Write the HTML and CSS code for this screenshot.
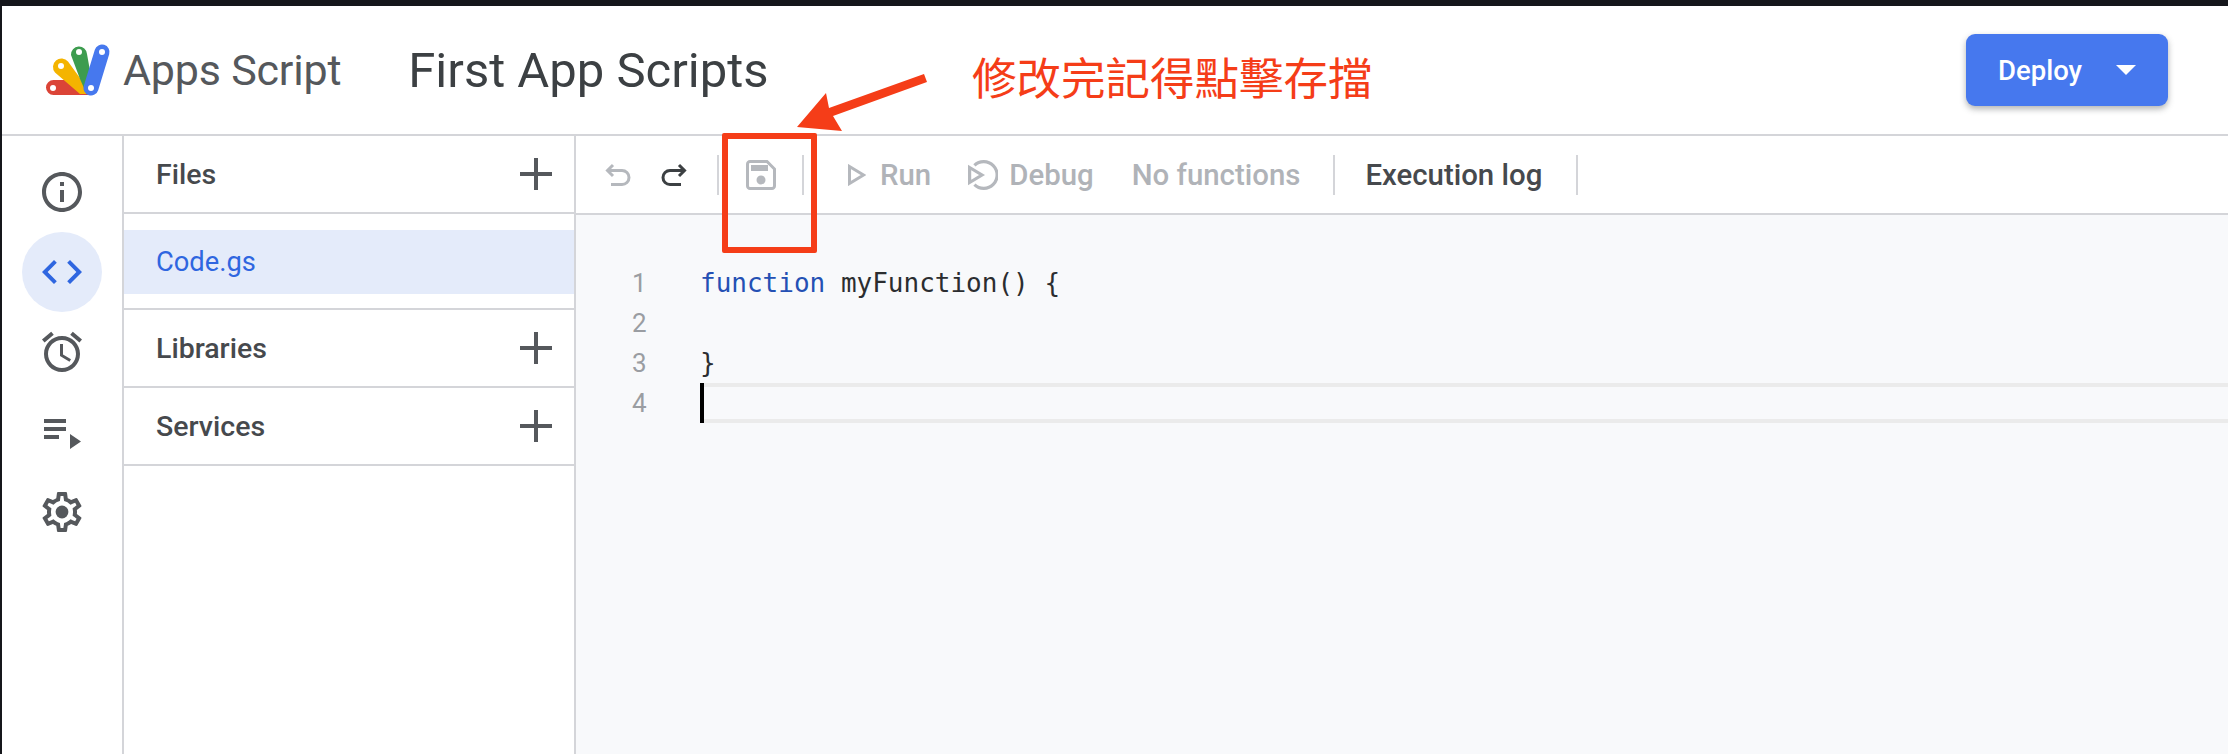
FILE: index.html
```html
<!DOCTYPE html>
<html lang="zh-Hant">
<head>
<meta charset="utf-8">
<title>Apps Script</title>
<link rel="stylesheet" href="styles.css">
</head>
<body>
<div class="topbar"></div>
<div class="app">
  <header class="header">
    <svg class="logo" viewBox="44 40 68 56" aria-hidden="true">
      <path fill="#db4437" d="M53.500 78H72L89 93H53.500a7.500 7.500 0 0 1 0-15z"/>
      <path fill="#f4b400" d="M55 70.500L80 92H89L80 76 68 59.500A8.500 8.500 0 0 0 55 70.500z"/>
      <path fill="#3d9c4f" d="M71 53A8 8 0 0 1 87 52L92 80 87 93 80 77z"/>
      <line x1="102" y1="50" x2="91" y2="86" stroke="#4678ee" stroke-width="15" stroke-linecap="round"/>
      <circle cx="53" cy="86" r="3" fill="#fff"/>
      <circle cx="61" cy="64" r="3" fill="#fff"/>
      <circle cx="79" cy="50" r="3" fill="#fff"/>
      <circle cx="102" cy="50" r="3" fill="#fff"/>
      <circle cx="91" cy="86" r="3" fill="#fff"/>
    </svg>
    <span class="brand">Apps Script</span>
    <h1 class="project">First App Scripts</h1>
    <button class="deploy"><span>Deploy</span><i class="caret"></i></button>
  </header>
  <div class="main">
    <nav class="rail">
      <a class="rail-btn"><svg viewBox="0 0 24 24"><path d="M11 7h2v2h-2zm0 4h2v6h-2zm1-9C6.480 2 2 6.480 2 12s4.480 10 10 10 10-4.480 10-10S17.520 2 12 2zm0 18c-4.410 0-8-3.590-8-8s3.590-8 8-8 8 3.590 8 8-3.590 8-8 8z"/></svg></a>
      <a class="rail-btn active"><svg viewBox="0 0 24 24"><path d="M9.400 16.600L4.800 12l4.600-4.600L8 6l-6 6 6 6 1.400-1.400zm5.200 0l4.600-4.600-4.600-4.600L16 6l6 6-6 6-1.400-1.400z"/></svg></a>
      <a class="rail-btn"><svg viewBox="0 0 24 24"><path d="M22 5.720l-4.600-3.860-1.290 1.530 4.600 3.860L22 5.720zM7.880 3.390L6.600 1.860 2 5.710l1.290 1.530 4.590-3.850zM12.500 8H11v6l4.750 2.850.75-1.230-4-2.370V8zM12 4c-4.970 0-9 4.030-9 9s4.030 9 9 9 9-4.030 9-9-4.030-9-9-9zm0 16c-3.870 0-7-3.130-7-7s3.130-7 7-7 7 3.130 7 7-3.130 7-7 7z"/></svg></a>
      <a class="rail-btn"><svg viewBox="0 0 24 24"><path d="M3 5.500h11v2H3zM3 9.500h11v2H3zM3 13.500h7.500v2H3zM16 13l5.500 3.750L16 20.500z"/></svg></a>
      <a class="rail-btn"><svg viewBox="0 0 24 24"><path d="M19.430 12.980c.04-.32.07-.64.07-.98 0-.34-.03-.66-.07-.98l2.110-1.650c.19-.15.24-.42.12-.64l-2-3.460c-.09-.16-.26-.25-.44-.25-.06 0-.12.01-.17.03l-2.490 1c-.52-.4-1.080-.73-1.690-.98l-.38-2.650C14.460 2.180 14.250 2 14 2h-4c-.25 0-.46.18-.49.42l-.38 2.650c-.61.25-1.170.59-1.690.98l-2.490-1c-.06-.02-.12-.03-.18-.03-.17 0-.34.09-.43.25l-2 3.460c-.13.22-.07.49.12.64l2.110 1.650c-.04.32-.07.65-.07.98 0 .33.03.66.07.98l-2.110 1.650c-.19.15-.24.42-.12.64l2 3.460c.09.16.26.25.44.25.06 0 .12-.01.17-.03l2.490-1c.52.4 1.080.73 1.690.98l.38 2.650c.03.24.24.42.49.42h4c.25 0 .46-.18.49-.42l.38-2.650c.61-.25 1.170-.59 1.690-.98l2.490 1c.06.02.12.03.18.03.17 0 .34-.09.43-.25l2-3.460c.12-.22.07-.49-.12-.64l-2.110-1.650zm-1.980-1.710c.04.31.05.52.05.73 0 .21-.02.43-.05.73l-.14 1.130.89.7 1.080.84-.7 1.210-1.270-.51-1.040-.42-.9.68c-.43.32-.84.56-1.250.73l-1.060.43-.16 1.130-.2 1.350h-1.400l-.19-1.350-.16-1.130-1.060-.43c-.43-.18-.83-.41-1.230-.71l-.91-.7-1.060.43-1.270.51-.7-1.210 1.080-.84.89-.7-.14-1.130c-.03-.31-.05-.54-.05-.74s.02-.43.05-.73l.14-1.130-.89-.7-1.080-.84.7-1.210 1.270.51 1.040.42.9-.68c.43-.32.84-.56 1.250-.73l1.060-.43.16-1.130.2-1.350h1.390l.19 1.350.16 1.130 1.060.43c.43.18.83.41 1.230.71l.91.7 1.060-.43 1.270-.51.7 1.210-1.070.85-.89.7.14 1.130z"/><circle cx="12" cy="12" r="3.200"/></svg></a>
    </nav>
    <aside class="panel">
      <div class="section"><span>Files</span><svg class="plus" viewBox="0 0 32 32"><path d="M14 0h4v14h14v4H18v14h-4V18H0v-4h14z"/></svg></div>
      <div class="files"><div class="file">Code.gs</div></div>
      <div class="section"><span>Libraries</span><svg class="plus" viewBox="0 0 32 32"><path d="M14 0h4v14h14v4H18v14h-4V18H0v-4h14z"/></svg></div>
      <div class="section"><span>Services</span><svg class="plus" viewBox="0 0 32 32"><path d="M14 0h4v14h14v4H18v14h-4V18H0v-4h14z"/></svg></div>
    </aside>
    <section class="workspace">
      <div class="toolbar">
        <svg class="tool-icon undo" viewBox="0 0 26 24"><path d="M8 2L2.500 7.500 8 13M3 7.500H17a6.500 6.500 0 0 1 0 14H6"/></svg>
        <svg class="tool-icon redo" viewBox="0 0 26 24"><path d="M18 2L23.500 7.500 18 13M23 7.500H9a6.500 6.500 0 0 0 0 14H20"/></svg>
        <i class="sep sep-a"></i>
        <svg class="save" viewBox="0 0 30 30"><path class="save-line" d="M4 1.500H21L28.500 9V26a2.500 2.500 0 0 1-2.500 2.500H4A2.500 2.500 0 0 1 1.500 26V4A2.500 2.500 0 0 1 4 1.500z"/><rect class="save-fill" x="5" y="5" width="17" height="6"/><circle class="save-fill" cx="15" cy="20" r="4.500"/></svg>
        <i class="sep sep-b"></i>
        <svg class="run-icon" viewBox="0 0 18 22"><path d="M1.500 2.500L15.500 11 1.500 19.500z"/></svg>
        <span class="tool-text run-label">Run</span>
        <svg class="debug-icon" viewBox="0 0 28 28"><path d="M1.500 7L13 14 1.500 21zM6 5A12.500 12.500 0 1 1 6 23"/></svg>
        <span class="tool-text debug-label">Debug</span>
        <span class="tool-text fn-label">No functions</span>
        <i class="sep sep-c"></i>
        <span class="tool-text log-label">Execution log</span>
        <i class="sep sep-d"></i>
      </div>
      <div class="editor">
        <div class="line"><span class="num">1</span><code><b class="kw">function</b> myFunction() {</code></div>
        <div class="line"><span class="num">2</span><code></code></div>
        <div class="line"><span class="num">3</span><code>}</code></div>
        <div class="line"><span class="num">4</span><code class="current"></code></div>
      </div>
    </section>
  </div>
</div>
<div class="note">修改完記得點擊存擋</div>
<svg class="arrow" viewBox="790 70 140 70" aria-hidden="true"><path d="M924 74L927 82 833 116 842 131 797 127 826 93 829 108z"/></svg>
<div class="redbox"></div>
</body>
</html>
```

FILE: styles.css
```css
* { box-sizing: border-box; }
html, body { margin: 0; height: 100%; }
body {
  position: relative;
  width: 2228px;
  height: 754px;
  overflow: hidden;
  display: flex;
  flex-direction: column;
  background: #fff;
  color: #3c4043;
  font-family: Roboto, "Noto Sans", sans-serif;
}
.topbar { height: 6px; background: #15161b; flex: none; }
.app {
  flex: 1;
  display: flex;
  flex-direction: column;
  border-left: 2px solid #15161b;
  min-height: 0;
}
.header {
  height: 130px;
  flex: none;
  display: flex;
  align-items: center;
  border-bottom: 2px solid #d4d5d9;
  padding: 0 60px 0 42px;
}
.logo { width: 68px; height: 56px; flex: none; margin-right: 11px; }
.brand { font-size: 43px; color: #55585c; letter-spacing: -0.2px; }
.project { margin: 0 0 0 67px; font-size: 49px; font-weight: 400; color: #3c4043; }
.deploy {
  margin-left: auto;
  width: 202px;
  height: 72px;
  border: 0;
  border-radius: 9px;
  background: #4678ee;
  color: #fff;
  font: 500 27.5px Roboto, sans-serif;
  display: flex;
  align-items: center;
  padding: 0 0 0 32px;
  box-shadow: 0 3px 6px rgba(60, 64, 67, .4);
}
.caret {
  margin-left: 34px;
  border-left: 10px solid transparent;
  border-right: 10px solid transparent;
  border-top: 10px solid #fff;
}
.main { flex: 1; display: flex; min-height: 0; }
.rail {
  width: 122px;
  flex: none;
  border-right: 2px solid #d4d5d9;
  display: flex;
  flex-direction: column;
  align-items: center;
  padding: 16px 0 0 0;
}
.rail-btn {
  width: 80px;
  height: 80px;
  border-radius: 50%;
  display: flex;
  align-items: center;
  justify-content: center;
}
.rail-btn svg { width: 48px; height: 48px; fill: #55585c; }
.rail-btn.active { background: #e4ebfa; }
.rail-btn.active svg { fill: #2f66e0; }
.panel { width: 452px; flex: none; border-right: 2px solid #d4d5d9; }
.section {
  height: 78px;
  border-bottom: 2px solid #d4d5d9;
  display: flex;
  align-items: center;
  justify-content: space-between;
  padding: 1px 22px 0 32px;
  font-size: 28.5px;
  font-weight: 500;
  color: #46494d;
}
.plus { width: 32px; height: 32px; fill: #55585c; margin-top: -1px; }
.files { height: 96px; border-bottom: 2px solid #d4d5d9; padding-top: 16px; }
.file {
  height: 64px;
  background: #e4ebfa;
  color: #2f66e0;
  font-size: 27.3px;
  display: flex;
  align-items: center;
  padding-left: 32px;
}
.workspace { flex: 1; display: flex; flex-direction: column; min-width: 0; background: #f8f9fb; }
.toolbar {
  height: 79px;
  flex: none;
  background: #fff;
  border-bottom: 2px solid #d4d5d9;
  display: flex;
  align-items: center;
  padding: 0 0 0 29px;
}
.tool-icon { width: 26px; height: 24px; fill: none; stroke-width: 3; }
.undo { stroke: #b5b8bd; }
.redo { stroke: #3c4043; margin-left: 30px; }
.sep { width: 2px; height: 40px; background: #d4d5d9; flex: none; }
.sep-a { margin-left: 30px; }
.save { width: 30px; height: 30px; margin-left: 27px; flex: none; }
.save-line { fill: none; stroke: #b5b8bd; stroke-width: 3; }
.save-fill { fill: #b5b8bd; }
.sep-b { margin-left: 26px; }
.run-icon { width: 18px; height: 22px; margin-left: 44px; fill: none; stroke: #b5b8bd; stroke-width: 3; }
.tool-text { font-size: 29.4px; font-weight: 500; color: #b0b3b8; }
.run-label { margin-left: 14px; }
.debug-icon { width: 30px; height: 30px; margin-left: 37px; fill: none; stroke: #b5b8bd; stroke-width: 3; }
.debug-label { margin-left: 11px; }
.fn-label { margin-left: 38px; }
.sep-c { margin-left: 33px; }
.log-label { margin-left: 30px; color: #46494d; }
.sep-d { margin-left: 34px; }
.editor { flex: 1; padding-top: 48px; }
.line { height: 40px; display: flex; align-items: center; }
.num { width: 125px; padding-left: 56px; font-size: 26px; color: #9a9da2; flex: none; }
.line code { font: 26px "DejaVu Sans Mono", monospace; color: #2b2d30; margin-left: -1px; }
.kw { font-weight: 400; color: #2450b4; }
.line code.current {
  flex: 1;
  height: 40px;
  border-top: 4px solid #ebebeb;
  border-bottom: 4px solid #ebebeb;
  display: flex;
}
.current::before {
  content: "";
  width: 4px;
  height: 40px;
  margin-top: -4px;
  background: #000;
}
.note {
  position: absolute;
  left: 972px;
  top: 48px;
  font: 400 44.5px/56px "Noto Sans CJK TC", sans-serif;
  color: #f53d18;
  white-space: nowrap;
}
.arrow { position: absolute; left: 790px; top: 70px; width: 140px; height: 70px; fill: #f53d18; }
.redbox {
  position: absolute;
  left: 722px;
  top: 133px;
  width: 95px;
  height: 120px;
  border: 6px solid #f53d18;
  border-radius: 2px;
}
```
